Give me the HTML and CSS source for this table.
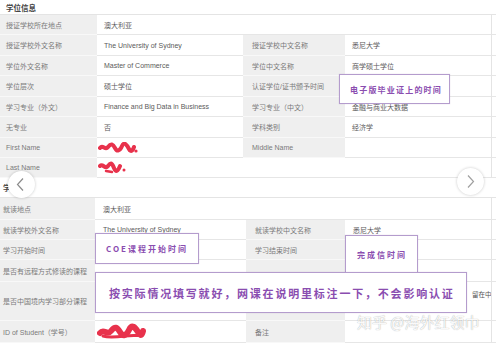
FILE: index.html
```html
<!DOCTYPE html>
<html>
<head>
<meta charset="utf-8">
<link rel="stylesheet" href="styles.css">
</head>
<body>
<div class="page">
  <div class="sec-title h15">学位信息</div>
  <div class="tbl upper">
    <div class="row h20"><div class="lab">授证学校所在地点</div><div class="val span3">澳大利亚</div></div>
    <div class="row h21"><div class="lab">授证学校外文名称</div><div class="val">The University of Sydney</div><div class="lab lab2">授证学校中文名称</div><div class="val">悉尼大学</div></div>
    <div class="row h20"><div class="lab">学位外文名称</div><div class="val">Master of Commerce</div><div class="lab lab2">学位中文名称</div><div class="val">商学硕士学位</div></div>
    <div class="row h21"><div class="lab">学位层次</div><div class="val">硕士学位</div><div class="lab lab2">认证学位/证书颁予时间</div><div class="val"></div></div>
    <div class="row h20"><div class="lab">学习专业（外文）</div><div class="val">Finance and Big Data in Business</div><div class="lab lab2">学习专业（中文）</div><div class="val">金融与商业大数据</div></div>
    <div class="row h21"><div class="lab">无专业</div><div class="val">否</div><div class="lab lab2">学科类别</div><div class="val">经济学</div></div>
    <div class="row h20"><div class="lab">First Name</div><div class="val">
      <svg class="scrib" width="40" height="12" viewBox="0 0 40 12"><path d="M2 6 C5 2 7 9 10 5 S15 2 17 6 S22 9 24 4 S29 3 31 7 S35 8 36 5" fill="none" stroke="#e8324c" stroke-width="4" stroke-linecap="round"/><circle cx="38" cy="9" r="1.6" fill="#e8324c"/></svg>
    </div><div class="lab lab2">Middle Name</div><div class="val"></div></div>
    <div class="row h20"><div class="lab">Last Name</div><div class="val span3">
      <svg class="scrib" width="28" height="13" viewBox="0 0 28 13"><path d="M2 5 C5 2 7 9 10 5 S14 2 16 7 S20 10 22 5" fill="none" stroke="#e8324c" stroke-width="4" stroke-linecap="round"/><path d="M8 10 L14 11" stroke="#e8324c" stroke-width="2.5" stroke-linecap="round"/><circle cx="26" cy="9" r="1.5" fill="#e8324c"/></svg>
    </div></div>
  </div>
  <div class="sec-title h20 lower-title">学习信息</div>
  <div class="tbl lower">
    <div class="row h22"><div class="lab">就读地点</div><div class="val span3">澳大利亚</div></div>
    <div class="row h20"><div class="lab">就读学校外文名称</div><div class="val">The University of Sydney</div><div class="lab lab2">就读学校中文名称</div><div class="val">悉尼大学</div></div>
    <div class="row h20"><div class="lab">学习开始时间</div><div class="val"></div><div class="lab lab2">学习结束时间</div><div class="val"></div></div>
    <div class="row h22"><div class="lab">是否有远程方式修读的课程</div><div class="val"></div><div class="lab lab2"></div><div class="val"></div></div>
    <div class="row h39"><div class="lab">是否中国境内学习部分课程</div><div class="val"></div><div class="lab lab2"></div><div class="val top"><span class="far">留在中</span></div></div>
    <div class="row h22"><div class="lab">ID of Student（学号）</div><div class="val">
      <svg class="scrib" width="50" height="18" viewBox="0 0 50 18"><path d="M3 10 C7 5 10 13 14 8 S20 4 23 9 S29 13 32 7 S38 4 41 9 S45 12 46 8" fill="none" stroke="#e8324c" stroke-width="6" stroke-linecap="round"/><path d="M6 13 C12 15 20 14 28 13 S38 13 44 12" fill="none" stroke="#e8324c" stroke-width="3" stroke-linecap="round"/></svg>
    </div><div class="lab lab2">备注</div><div class="val"></div></div>
  </div>

  <div class="note n1">电子版毕业证上的时间</div>
  <div class="note n2">COE课程开始时间</div>
  <div class="note n3">完成信时间</div>
  <div class="note n4">按实际情况填写就好，网课在说明里标注一下，不会影响认证</div>

  <div class="watermark">知乎 @海外红领巾</div>

  <div class="nav nav-left"><svg width="27" height="27" viewBox="0 0 27 27"><polyline points="15,7.5 9.5,13.5 15,19.5" fill="none" stroke="#8c8c8c" stroke-width="1.2"/></svg></div>
  <div class="nav nav-right"><svg width="27" height="27" viewBox="0 0 27 27"><polyline points="11,7.5 16.5,13.5 11,19.5" fill="none" stroke="#a0a0a0" stroke-width="1.2"/></svg></div>
</div>
</body>
</html>
```
FILE: styles.css
```css
* { box-sizing: border-box; margin: 0; padding: 0; }
html, body { background: #fff; }
body { margin: 0; font-family: "Liberation Sans", "Noto Sans CJK SC", sans-serif; }

.page {
  position: relative;
  width: 496px;
  height: 345px;
  overflow: hidden;
  background: #fff;
}

.sec-title {
  display: flex;
  align-items: center;
  padding-left: 6px;
  font-size: 7.5px;
  font-weight: bold;
  color: #444;
  border-bottom: 1px solid #e4e4e4;
  background: #fff;
}
.lower-title { padding-left: 3px; }

.h15 { height: 15px; }
.h20 { height: 20px; }
.h21 { height: 21px; }
.h22 { height: 22px; }
.h39 { height: 39px; }

.row {
  display: grid;
}
.upper .row { grid-template-columns: 97px 146px 102px 146px 5px; }
.lower .row { grid-template-columns: 95px 151px 99px 146px 5px; }
.row::after {
  content: "";
  border-left: 1px solid #e4e4e4;
  border-bottom: 1px solid #e6e6e6;
}

.lab, .val {
  display: flex;
  align-items: center;
  font-size: 7px;
  white-space: nowrap;
  overflow: hidden;
}
.lab {
  background: #efefef;
  color: #7a7a7a;
  padding-left: 6px;
  border-bottom: 1px solid #f8f8f8;
}
.lower .lab { padding-left: 3px; }
.lab2 { padding-left: 9px; }
.lower .lab2 { padding-left: 9px; }
.val {
  background: #fff;
  color: #5a5a5a;
  padding-left: 7px;
  border-bottom: 1px solid #e6e6e6;
}
.lower .val { padding-left: 8px; }
.span3 { grid-column: 2 / 5; }
.val.top { align-items: flex-start; padding-top: 7px; }
.far { padding-left: 119px; font-size: 6.5px; color: #555; }

.scrib { display: block; margin-left: -6px; }

.note {
  position: absolute;
  display: flex;
  align-items: center;
  background: #fff;
  border: 1px solid #b49ccd;
  color: #8a4db0;
  font-family: "Noto Sans CJK SC", sans-serif;
  font-weight: bold;
  white-space: nowrap;
  box-shadow: 0 0 1px rgba(120, 80, 160, 0.25);
}
.n1 { left: 339px; top: 74px; width: 111px; height: 30px; font-size: 8px; letter-spacing: 1.2px; padding-left: 10px; }
.n2 { left: 95px; top: 233px; width: 104px; height: 31px; font-size: 8px; letter-spacing: 2px; padding-left: 10px; }
.n3 { left: 345px; top: 235px; width: 73px; height: 40px; font-size: 8px; letter-spacing: 2px; padding-left: 11px; align-items: flex-start; padding-top: 13px; }
.n4 { left: 95px; top: 272px; width: 372px; height: 41px; font-size: 11px; letter-spacing: 1.8px; padding-left: 13px; }

.watermark {
  position: absolute;
  left: 357px;
  top: 313px;
  font-family: "Noto Sans CJK SC", sans-serif;
  font-size: 15px;
  line-height: 18px;
  color: rgba(255, 255, 255, 0.95);
  text-shadow: 0 0 1px rgba(0, 0, 0, 0.4);
  white-space: nowrap;
}

.nav {
  position: absolute;
  width: 27px;
  height: 27px;
  border-radius: 50%;
  background: #fff;
  box-shadow: 0 0 3px rgba(0, 0, 0, 0.22);
}
.nav svg { display: block; }
.nav-left { left: 8px; top: 171px; }
.nav-right { left: 457px; top: 168px; }
```
